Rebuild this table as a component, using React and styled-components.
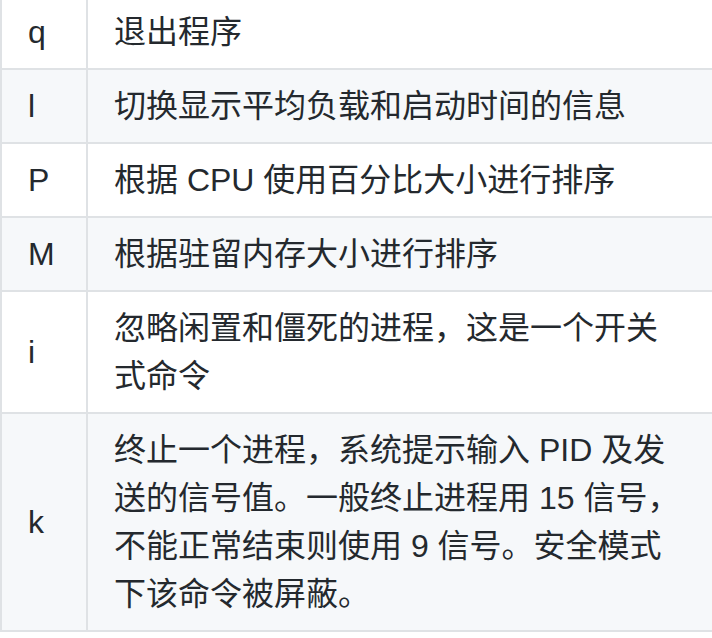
import React from 'react';
import styled, { createGlobalStyle } from 'styled-components';

const GlobalStyle = createGlobalStyle`
  html, body {
    margin: 0;
    padding: 0;
    background: #fff;
    overflow: hidden;
  }
  body {
    font-family: "Liberation Sans", "Noto Sans CJK SC", sans-serif;
    color: #24292e;
  }
`;

const commands = [
  { key: 'q', desc: '退出程序' },
  { key: 'l', desc: '切换显示平均负载和启动时间的信息' },
  { key: 'P', desc: '根据 CPU 使用百分比大小进行排序' },
  { key: 'M', desc: '根据驻留内存大小进行排序' },
  { key: 'i', desc: '忽略闲置和僵死的进程，这是一个开关式命令' },
  { key: 'k', desc: '终止一个进程，系统提示输入 PID 及发送的信号值。一般终止进程用 15 信号，不能正常结束则使用 9 信号。安全模式下该命令被屏蔽。' },
];

function App() {
  return (
    <>
      <GlobalStyle />
      <Table>
        <tbody>
          {commands.map(cmd => (
            <Row key={cmd.key}>
              <KeyCell>{cmd.key}</KeyCell>
              <DescCell>{cmd.desc}</DescCell>
            </Row>
          ))}
        </tbody>
      </Table>
    </>
  );
}

export default App;

// table styles, github markdown look at 2x
const Table = styled.table`
  border-collapse: collapse;
  border-spacing: 0;
  table-layout: fixed;
  width: 720px;
  margin-top: -6px;
  font-size: 32px;
  line-height: 48px;
`;

const Row = styled.tr`
  background-color: #fff;

  &:nth-child(2n) {
    background-color: #f6f8fa;
  }
`;

const Cell = styled.td`
  border: 2px solid #dfe2e5;
  padding: 12px 26px;
  vertical-align: middle;
  text-align: left;
`;

const KeyCell = styled(Cell)`
  width: 86px;
  box-sizing: border-box;
`;

const DescCell = styled(Cell)`
  padding-right: 36px;
`;
